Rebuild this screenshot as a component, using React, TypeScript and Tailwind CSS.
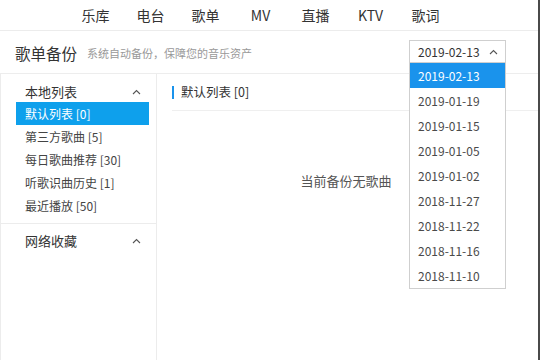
import React from 'react';

const navItems = ['乐库', '电台', '歌单', 'MV', '直播', 'KTV', '歌词'];

const localLists = [
  { name: '默认列表', count: 0 },
  { name: '第三方歌曲', count: 5 },
  { name: '每日歌曲推荐', count: 30 },
  { name: '听歌识曲历史', count: 1 },
  { name: '最近播放', count: 50 },
];

const backupDates = [
  '2019-02-13',
  '2019-01-19',
  '2019-01-15',
  '2019-01-05',
  '2019-01-02',
  '2018-11-27',
  '2018-11-22',
  '2018-11-16',
  '2018-11-10',
];

const Chevron: React.FC<{ className?: string }> = ({ className }) => (
  <svg width="9" height="6" viewBox="0 0 9 6" className={className}>
    <path d="M1 5 L4.5 1.5 L8 5" fill="none" stroke="#555" strokeWidth="1.1" />
  </svg>
);

const DateSelect: React.FC = () => (
  <div className="relative w-[97px] mt-[-1px]">
    <div className="h-[23px] border border-[#cfcfcf] bg-white flex items-center pl-[8px] pr-[7px] text-[12px] text-[#333]">
      <span className="flex-1">{backupDates[0]}</span>
      <Chevron />
    </div>
    {/* open list */}
    <div className="absolute left-0 top-full w-full border border-t-0 border-[#cfcfcf] bg-white z-10">
      {backupDates.map((d, i) => (
        <div
          key={d}
          className={`h-[25px] flex items-center pl-[8px] text-[12px] ${
            i === 0 ? 'bg-[#1a93ec] text-white' : 'text-[#4a4a4a]'
          }`}
        >
          {d}
        </div>
      ))}
    </div>
  </div>
);

export default function App() {
  return (
    <div className="w-[540px] h-[360px] overflow-hidden bg-white flex font-['Noto_Sans_CJK_SC','Noto_Sans',sans-serif]">
      <div className="flex-1 flex flex-col min-w-0">
        {/* Top nav */}
        <div className="h-[31px] border-b border-[#ececec] flex items-center pl-[68px]">
          {navItems.map((n) => (
            <div key={n} className="w-[55px] text-center text-[14px] text-[#333] leading-none">
              {n}
            </div>
          ))}
        </div>

        {/* Header */}
        <div className="h-[43px] border-b border-[#ededed] flex items-center pl-[15px] pr-[32px]">
          <span className="text-[15.5px] text-[#333] leading-none mt-[3px]">歌单备份</span>
          <span className="ml-[10px] text-[11px] text-[#999] leading-none flex-1 mt-[3px]">系统自动备份，保障您的音乐资产</span>
          <DateSelect />
        </div>

        <div className="flex flex-1 min-h-0">
          {/* Sidebar */}
          <div className="w-[157px] border-l border-r border-[#ececec] flex flex-col">
            <div className="h-[28px] flex items-end pb-[4px] pl-[24px] pr-[15px] text-[13px] text-[#333]">
              <span className="flex-1 leading-none">本地列表</span>
              <Chevron className="mb-[3px]" />
            </div>
            <div className="flex flex-col pl-[15px] pr-[7px]">
              {localLists.map((l, i) => (
                <div
                  key={l.name}
                  className={`h-[23px] flex items-center pl-[9px] text-[12px] ${
                    i === 0 ? 'bg-[#0ea0ec] text-white' : 'text-[#444]'
                  }`}
                >
                  {l.name} [{l.count}]
                </div>
              ))}
            </div>
            <div className="mt-[6px] border-t border-[#ececec] h-[34px] flex items-center pl-[24px] pr-[15px] text-[13px] text-[#333]">
              <span className="flex-1 leading-none">网络收藏</span>
              <Chevron />
            </div>
          </div>

          {/* Main */}
          <div className="flex-1 flex flex-col pl-[15px]">
            <div className="h-[37px] border-b border-[#efefef] flex items-center">
              <div className="w-[2px] h-[13px] bg-[#1a93ec] mr-[7px]" />
              <span className="text-[12.5px] text-[#333] leading-none">默认列表 [0]</span>
            </div>
            <div className="h-[76px] flex items-end justify-center pr-[18px] text-[13px] text-[#555] leading-none">
              当前备份无歌曲
            </div>
          </div>
        </div>
      </div>
      {/* window edge */}
      <div className="w-[2px] bg-[#4a4a4a]" />
    </div>
  );
}
